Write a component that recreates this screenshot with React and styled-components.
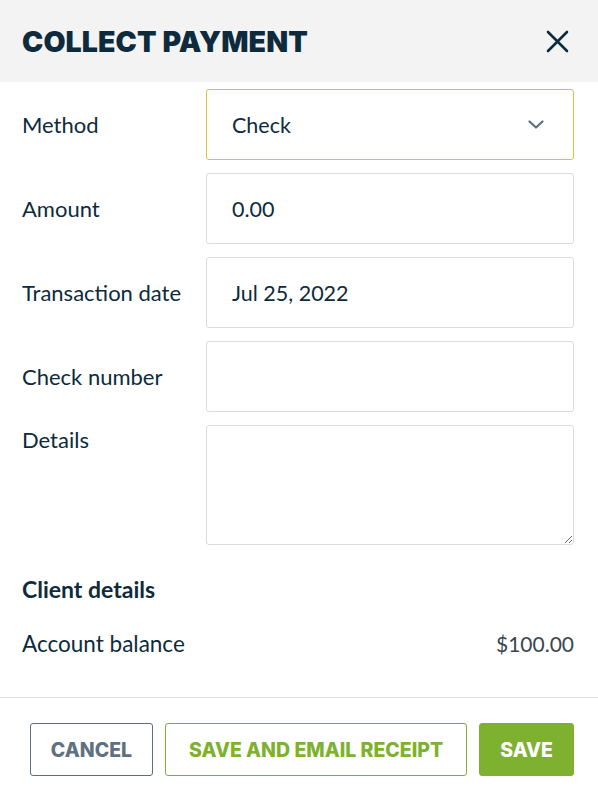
import React from "react";
import styled, { createGlobalStyle } from "styled-components";

const Global = createGlobalStyle`
  html, body { margin: 0; padding: 0; background: #fff; }
  body { font-family: "Lato", "Open Sans", sans-serif; color: #0d2b3c; }
  * { box-sizing: border-box; }
`;

const Modal = styled.div`
  width: 598px;
  height: 799px;
  display: flex;
  flex-direction: column;
  background: #fff;
`;

const Header = styled.header`
  height: 82px;
  background: #f3f3f3;
  display: flex;
  align-items: center;
  justify-content: space-between;
  padding: 0 28px 0 22px;
`;

const Title = styled.h1`
  margin: 0;
  font-family: "Inter", sans-serif;
  font-weight: 900;
  font-size: 28.5px;
  letter-spacing: 0.1px;
  color: #0d2b3c;
`;

const CloseButton = styled.button`
  border: 0;
  background: none;
  padding: 0;
  width: 26px;
  height: 26px;
  display: flex;
  align-items: center;
  justify-content: center;
  cursor: pointer;
`;

const Form = styled.div`
  display: flex;
  flex-direction: column;
  gap: 13px;
  padding: 7px 24px 0 22px;
`;

const Row = styled.div`
  display: grid;
  grid-template-columns: 184px 1fr;
  align-items: ${(p) => (p.$top ? "start" : "center")};
`;

const Label = styled.label`
  font-size: 22px;
  color: #0d2b3c;
  white-space: nowrap;
  padding-top: ${(p) => (p.$top ? "1px" : "0")};
`;

const Field = styled.div`
  height: 71px;
  border: 1px solid ${(p) => (p.$focus ? "#d8c53a" : "#dcdcdc")};
  border-radius: 3px;
  display: flex;
  align-items: center;
  justify-content: space-between;
  padding: 0 29px 0 25px;
  font-size: 21.5px;
  color: #0d2b3c;
`;

const TextArea = styled.textarea`
  height: 120px;
  border: 1px solid #dcdcdc;
  border-radius: 3px;
  font-family: inherit;
  font-size: 20px;
  padding: 12px 25px;
  resize: vertical;
  width: 100%;
  display: block;
`;

const Section = styled.div`
  padding: 30px 24px 0 22px;
`;

const SectionTitle = styled.h2`
  margin: 0;
  font-size: 23px;
  font-weight: 700;
  color: #0d2b3c;
`;

const InfoRow = styled.div`
  display: flex;
  justify-content: space-between;
  align-items: baseline;
  margin-top: 27px;
  font-size: 22.5px;
  color: #0d2b3c;
`;

const Value = styled.span`
  font-size: 21px;
  color: #3a4650;
`;

const Footer = styled.footer`
  margin-top: 40px;
  border-top: 1px solid #e0e0e0;
  padding: 25px 24px 0 24px;
  display: flex;
  justify-content: flex-end;
  gap: 12px;
`;

const Button = styled.button`
  height: 53px;
  padding: 0 ${(p) => p.$px || 20}px;
  border-radius: 3px;
  font-family: "Inter", sans-serif;
  font-weight: 800;
  font-size: 19.5px;
  letter-spacing: 0px;
  white-space: nowrap;
  text-transform: uppercase;
  cursor: pointer;
  border: 1px solid
    ${(p) => (p.$variant === "cancel" ? "#5c6f7e" : "#7db12f")};
  background: ${(p) => (p.$variant === "primary" ? "#7db12f" : "#fff")};
  color: ${(p) =>
    p.$variant === "primary"
      ? "#fff"
      : p.$variant === "cancel"
      ? "#5f7180"
      : "#7db12f"};
`;

export default function App() {
  return (
    <Modal>
      <Global />
      <Header>
        <Title>COLLECT PAYMENT</Title>
        <CloseButton aria-label="Close">
          <svg width="23" height="23" viewBox="0 0 23 23">
            <path d="M2 2L21 21M21 2L2 21" stroke="#0d2b3c" strokeWidth="2.6" strokeLinecap="round" />
          </svg>
        </CloseButton>
      </Header>
      <Form>
        <Row>
          <Label>Method</Label>
          <Field $focus>
            <span>Check</span>
            <svg width="16" height="9" viewBox="0 0 16 9">
              <path d="M1.5 1.5L8 7.5L14.5 1.5" stroke="#5f7180" strokeWidth="2.2" fill="none" strokeLinecap="round" strokeLinejoin="round" />
            </svg>
          </Field>
        </Row>
        <Row>
          <Label>Amount</Label>
          <Field>0.00</Field>
        </Row>
        <Row>
          <Label>Transaction date</Label>
          <Field>Jul 25, 2022</Field>
        </Row>
        <Row>
          <Label>Check number</Label>
          <Field />
        </Row>
        <Row $top>
          <Label $top>Details</Label>
          <TextArea />
        </Row>
      </Form>
      <Section>
        <SectionTitle>Client details</SectionTitle>
        <InfoRow>
          <span>Account balance</span>
          <Value>$100.00</Value>
        </InfoRow>
      </Section>
      <Footer>
        <Button $variant="cancel">Cancel</Button>
        <Button $variant="outline" $px={23}>Save and email receipt</Button>
        <Button $variant="primary">Save</Button>
      </Footer>
    </Modal>
  );
}
